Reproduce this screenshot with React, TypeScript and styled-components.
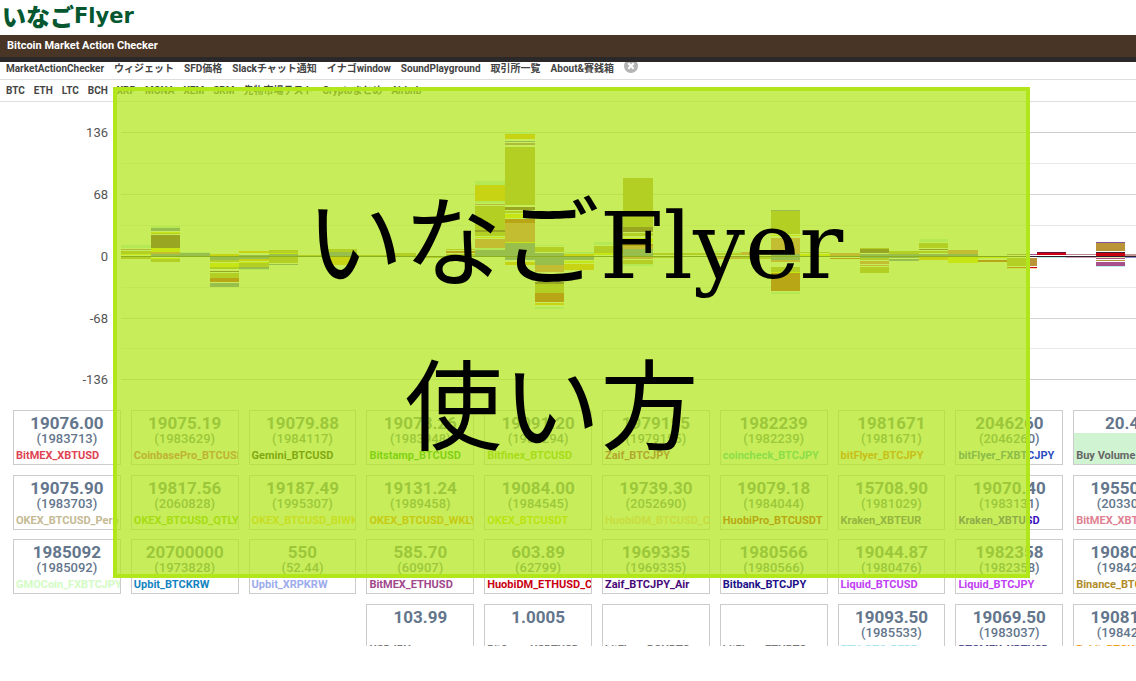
import React from "react";
import styled, { createGlobalStyle } from "styled-components";

const GlobalStyle = createGlobalStyle`
  * { box-sizing: border-box; }
  body {
    margin: 0;
    background: #fff;
    color: #444;
    font-family: Roboto, "Noto Sans CJK JP", sans-serif;
  }
`;

const Page = styled.div`
  position: relative;
  overflow: hidden;
`;

const Header = styled.header`
  height: 35px;
  padding-left: 2px;
  color: #04572f;
  line-height: 32px;
  white-space: nowrap;
`;

const Logo = styled.a`
  display: flex;
  align-items: center;
  color: inherit;
  text-decoration: none;
`;

const LogoKana = styled.span`
  font: 900 24px/32px "Noto Sans CJK JP", sans-serif;
`;

const LogoLatin = styled.span`
  font: 700 21px/32px "DejaVu Sans", sans-serif;
`;

const TitleBar = styled.h1`
  margin: 0;
  height: 27px;
  padding-left: 7px;
  background: #483526;
  border-bottom: 5px solid #2a2828;
  color: #fff;
  font-size: 11px;
  font-weight: 700;
  line-height: 21px;
`;

const NavRow = styled.nav<{ $compact?: boolean }>`
  display: flex;
  align-items: center;
  gap: ${(p) => (p.$compact ? 10 : 9)}px;
  height: ${(p) => (p.$compact ? 18 : 22)}px;
  padding: 0 6px ${(p) => (p.$compact ? 3 : 0)}px;
  border-bottom: 1px solid #ddd;
  overflow: hidden;
  white-space: nowrap;
`;

const NavLink = styled.a`
  color: #444;
  font-size: 10px;
  font-weight: 700;
  line-height: 12px;
  text-decoration: none;
`;

const CloseButton = styled.button`
  align-self: flex-start;
  display: flex;
  margin: -3px 0 0;
  padding: 0;
  border: 0;
  background: none;
`;

const Chart = styled.svg`
  display: block;
  width: 100%;
  height: 308px;
  font: 13px Roboto, sans-serif;
`;

const Board = styled.main`
  display: grid;
  grid-template-columns: repeat(10, minmax(0, 1fr));
  grid-template-rows: 55px 54px 55px 42px;
  gap: 10px;
  margin: 0 -45px 0 13px;
  overflow: hidden;
`;

const CardBox = styled.article<{ $column?: number; $filled?: boolean }>`
  height: 55px;
  padding-top: 4px;
  border: 1px solid #ccc;
  background: ${(p) => (p.$filled ? "linear-gradient(#fff 22px, #d0f4d2 22px)" : "#fff")};
  ${(p) => p.$column && `grid-column: ${p.$column};`}
  color: #64768c;
  overflow: hidden;
  white-space: nowrap;
`;

const Price = styled.div`
  height: 17px;
  font-size: 17px;
  font-weight: 700;
  line-height: 17px;
  text-align: center;
`;

const Yen = styled.div`
  height: 15px;
  font-size: 13px;
  font-weight: 500;
  line-height: 13px;
  text-align: center;
`;

const Market = styled.div<{ $color: string }>`
  margin-top: 2px;
  padding-left: 2px;
  color: ${(p) => p.$color};
  font-size: 11px;
  font-weight: 700;
  line-height: 14px;
`;

const Banner = styled.section`
  position: absolute;
  top: 87px;
  left: 113px;
  right: 106px;
  height: 491px;
  padding-top: 62px;
  border: 4px solid #b1e61a;
  background: rgba(177, 230, 26, 0.72);
  background-clip: padding-box;
  color: #000;
`;

const BannerLine = styled.p`
  margin: 0;
  padding-left: 6px;
  font: 400 98px/164px "Noto Sans CJK JP", sans-serif;
  text-align: center;
  white-space: nowrap;

  & + & {
    padding: 0 40px 0 0;
  }
`;

const BannerLatin = styled.span`
  font-family: "DejaVu Serif", serif;
  font-size: 92px;
  line-height: 100px;
`;

const gold = "#ba9439";
const olive = "#580032";
const red = "#cc0010";
const blue = "#585ccc";
const orange = "#ffa000";
const lime = "#ffe000";
const tan = "#eb556e";
const mint = "#bceeeb";
const mauve = "#a8508c";

type Segment = [number, number, string];

const bars: Record<number, Segment[]> = {
  0: [[245, 3, mint], [249, 1, mauve], [251, 3, gold], [254, 1, lime], [257, 2, gold]],
  1: [[226, 2, mint], [228, 3, blue], [232, 1, lime], [233, 1, gold], [235, 13, olive], [248, 4, lime], [252, 2, tan], [254, 2, blue], [258, 1, lime], [259, 3, gold]],
  2: [[252, 1, mint], [253, 4, blue]],
  3: [[254, 2, orange], [257, 3, blue], [260, 2, gold], [263, 4, lime], [267, 2, gold], [271, 1, olive], [273, 5, gold], [278, 4, red], [283, 4, blue]],
  4: [[251, 2, orange], [255, 4, blue], [259, 2, orange], [262, 1, lime], [263, 4, gold], [267, 2, blue], [269, 1, mint]],
  5: [[250, 3, gold], [253, 1, lime], [254, 2, blue], [257, 6, gold], [264, 1, blue]],
  6: [[255, 1, gold]],
  7: [[249, 3, gold], [252, 4, blue], [257, 8, orange]],
  8: [[255, 1, gold]],
  9: [[253, 3, gold]],
  10: [[257, 1, gold]],
  11: [[249, 1, gold], [251, 2, red], [254, 2, gold]],
  12: [[181, 4, mint], [185, 16, orange], [201, 2, mint], [204, 1, mauve], [206, 24, gold], [230, 2, olive], [232, 4, gold], [237, 1, lime], [239, 9, tan], [248, 2, mint], [250, 6, blue]],
  13: [[132, 2, mint], [134, 5, orange], [141, 1, blue], [143, 2, mauve], [147, 58, gold], [207, 3, olive], [211, 2, gold], [214, 4, lime], [219, 4, red], [223, 19, tan], [242, 1, lime], [243, 2, blue], [245, 11, blue], [257, 3, blue], [262, 3, orange]],
  14: [[245, 1, mint], [247, 5, gold], [253, 12, blue], [265, 7, tan], [278, 2, lime], [282, 2, olive], [284, 9, gold], [293, 9, red], [303, 2, orange], [307, 2, mint]],
  15: [[252, 2, mint], [254, 2, orange], [257, 3, blue], [261, 2, lime], [264, 6, orange]],
  16: [[242, 3, mint], [246, 7, gold], [253, 2, lime]],
  17: [[178, 49, gold], [227, 5, olive], [233, 3, gold], [238, 5, lime], [244, 2, red], [246, 3, tan], [249, 7, blue], [257, 2, tan], [260, 4, gold], [264, 2, mint]],
  18: [[253, 2, gold], [257, 1, gold]],
  19: [[253, 2, gold]],
  20: [[251, 1, mint], [253, 2, gold], [257, 2, tan]],
  21: [[252, 3, tan], [257, 2, gold]],
  22: [[210, 1, blue], [211, 23, gold], [235, 1, lime], [238, 16, tan], [254, 6, blue], [260, 2, tan], [267, 5, gold], [272, 1, lime], [273, 18, red], [292, 2, mint]],
  23: [[252, 1, gold], [254, 2, lime]],
  24: [[253, 3, tan], [258, 1, red]],
  25: [[248, 1, gold], [249, 4, olive], [254, 4, blue], [258, 2, gold], [261, 3, tan], [265, 1, tan], [267, 6, gold]],
  26: [[251, 3, gold], [254, 4, blue], [259, 2, blue]],
  27: [[239, 3, mint], [243, 5, gold], [249, 1, olive], [251, 2, gold], [254, 2, blue], [257, 3, orange]],
  28: [[250, 4, tan], [254, 3, blue], [257, 6, lime]],
  29: [[257, 1, lime], [260, 2, red]],
  30: [[254, 1, mauve], [258, 8, gold], [267, 1, red], [268, 1, "#ffdcae"]],
  31: [[252, 1, "#6b1238"], [253, 2, red], [257, 1, mint]],
  32: [[254, 1, "#bb8894"], [257, 1, "#d1a6af"]],
  33: [[242, 1, "#80529c"], [243, 8, gold], [252, 1, "#37202c"], [253, 3, red], [257, 1, "#eee0a6"], [258, 1, mauve], [260, 1, gold], [262, 4, mauve], [266, 1, mint]],
  34: [[254, 2, "#c49492"], [257, 1, "#8990ca"]],
};

const gridLines: [number, string, string?][] = [
  [132, "#ccc", "136"],
  [163, "#e8e8e8"],
  [194, "#d4d4d4", "68"],
  [225, "#e8e8e8"],
  [287, "#e8e8e8"],
  [318, "#d4d4d4", "-68"],
  [348, "#e8e8e8"],
  [379, "#ccc", "-136"],
];

// Values are measured down the page; the chart area begins below the menus.
const chartTop = 102;
const barWidth = 29.54;

function VolumeChart() {
  return (
    <Chart role="img" aria-label="Buy and sell volume">
      {gridLines.map(([y, color, label]) => (
        <g key={y}>
          <rect x="121" y={y - chartTop} width="100%" height="1" fill={color} />
          {label && (
            <text x="108" y={y - chartTop + 5} textAnchor="end" fill="#555">{label}</text>
          )}
        </g>
      ))}
      <text x="108" y={261 - chartTop} textAnchor="end" fill="#555">0</text>
      {Object.entries(bars).map(([slot, segments]) => {
        const x = Math.round(121 + Number(slot) * barWidth);
        const end = Math.round(121 + (Number(slot) + 1) * barWidth);
        return segments.map(([y, h, color]) => (
          <rect key={slot + "-" + y} x={x} y={y - chartTop} width={end - x} height={h} fill={color} />
        ));
      })}
      <rect x="121" y={256 - chartTop} width="100%" height="1" fill="#2c2030" />
    </Chart>
  );
}

interface Quote {
  price: string;
  yen: string;
  market: string;
  color: string;
  column?: number;
  filled?: boolean;
}

const q = (price: string, yen: string, market: string, color: string, extra: Partial<Quote> = {}): Quote => ({
  price, yen, market, color, ...extra,
});

const quotes: Quote[] = [
  q("19076.00", "(1983713)", "BitMEX_XBTUSD", "#e04452"),
  q("19075.19", "(1983629)", "CoinbasePro_BTCUSD", "#e02c78"),
  q("19079.88", "(1984117)", "Gemini_BTCUSD", "#000"),
  q("19073.26", "(1983948)", "Bitstamp_BTCUSD", "#009c00"),
  q("19091.20", "(1985294)", "Bitfinex_BTCUSD", "#8ec010"),
  q("1979155", "(1979155)", "Zaif_BTCJPY", "#b00060"),
  q("1982239", "(1982239)", "coincheck_BTCJPY", "#28c8c0"),
  q("1981671", "(1981671)", "bitFlyer_BTCJPY", "#ff5a10"),
  q("2046260", "(2046260)", "bitFlyer_FXBTCJPY", "#2a4cc0"),
  q("20.44", "", "Buy Volume", "#666", { filled: true }),
  q("19075.90", "(1983703)", "OKEX_BTCUSD_Perp", "#c4ba94"),
  q("19817.56", "(2060828)", "OKEX_BTCUSD_QTLY", "#8cc000"),
  q("19187.49", "(1995307)", "OKEX_BTCUSD_BIWK", "#ffc840"),
  q("19131.24", "(1989458)", "OKEX_BTCUSD_WKLY", "#ff8000"),
  q("19084.00", "(1984545)", "OKEX_BTCUSDT", "#d8d800"),
  q("19739.30", "(2052690)", "HuobiDM_BTCUSD_CQ", "#ffc4a0"),
  q("19079.18", "(1984044)", "HuobiPro_BTCUSDT", "#c80000"),
  q("15708.90", "(1981029)", "Kraken_XBTEUR", "#4830a0"),
  q("19070.40", "(1983131)", "Kraken_XBTUSD", "#3a10c0"),
  q("19550.00", "(2033004)", "BitMEX_XBTZ20", "#e08090"),
  q("1985092", "(1985092)", "GMOCoin_FXBTCJPY", "#d2fcc4"),
  q("20700000", "(1973828)", "Upbit_BTCKRW", "#1484c0"),
  q("550", "(52.44)", "Upbit_XRPKRW", "#9cacec"),
  q("585.70", "(60907)", "BitMEX_ETHUSD", "#a0488c"),
  q("603.89", "(62799)", "HuobiDM_ETHUSD_CQ", "#c80010"),
  q("1969335", "(1969335)", "Zaif_BTCJPY_Air", "#480878"),
  q("1980566", "(1980566)", "Bitbank_BTCJPY", "#201088"),
  q("19044.87", "(1980476)", "Liquid_BTCUSD", "#c040f4"),
  q("1982358", "(1982358)", "Liquid_BTCJPY", "#c040f4"),
  q("19080.64", "(1984234)", "Binance_BTCUSDT", "#b08c28"),
  q("103.99", "", "USDJPY", "#777", { column: 4 }),
  q("1.0005", "", "Bitfinex_USDTUSD", "#777"),
  q("", "", "bitFlyer_BCHBTC", "#777"),
  q("", "", "bitFlyer_ETHBTC", "#777"),
  q("19093.50", "(1985533)", "FTX_BTC-PERP", "#a8e4ee"),
  q("19069.50", "(1983037)", "BTCMEX_XBTUSD", "#50508c"),
  q("19081.50", "(1984285)", "Bybit_BTCUSD", "#f4a020"),
];

const pages = ["MarketActionChecker", "ウィジェット", "SFD価格", "Slackチャット通知", "イナゴwindow", "SoundPlayground", "取引所一覧", "About&賽銭箱"];
const coins = ["BTC", "ETH", "LTC", "BCH", "XRP", "MONA", "XEM", "SRM", "先物市場テスト", "Cryptoまとめ", "Airbnb"];

export default function App() {
  return (
    <>
      <GlobalStyle />
      <Page>
        <Header>
          <Logo href="#">
            <LogoKana>いなご</LogoKana>
            <LogoLatin>Flyer</LogoLatin>
          </Logo>
        </Header>
        <TitleBar>Bitcoin Market Action Checker</TitleBar>
        <NavRow $compact aria-label="Pages">
          {pages.map((name) => <NavLink key={name} href="#">{name}</NavLink>)}
          <CloseButton type="button" aria-label="Close menu">
            <svg width="14" height="14" viewBox="0 0 14 14">
              <circle cx="7" cy="7" r="7" fill="#b4b4b4" />
              <path d="M4.3 4.3 9.7 9.7M9.7 4.3 4.3 9.7" stroke="#fff" strokeWidth="2" />
            </svg>
          </CloseButton>
        </NavRow>
        <NavRow aria-label="Coins">
          {coins.map((name) => <NavLink key={name} href="#">{name}</NavLink>)}
        </NavRow>
        <VolumeChart />
        <Board>
          {quotes.map((item) => (
            <CardBox key={item.market} $column={item.column} $filled={item.filled}>
              <Price>{item.price}</Price>
              <Yen>{item.yen}</Yen>
              <Market $color={item.color}>{item.market}</Market>
            </CardBox>
          ))}
        </Board>
        <Banner>
          <BannerLine>いなご<BannerLatin>Flyer</BannerLatin></BannerLine>
          <BannerLine>使い方</BannerLine>
        </Banner>
      </Page>
    </>
  );
}
